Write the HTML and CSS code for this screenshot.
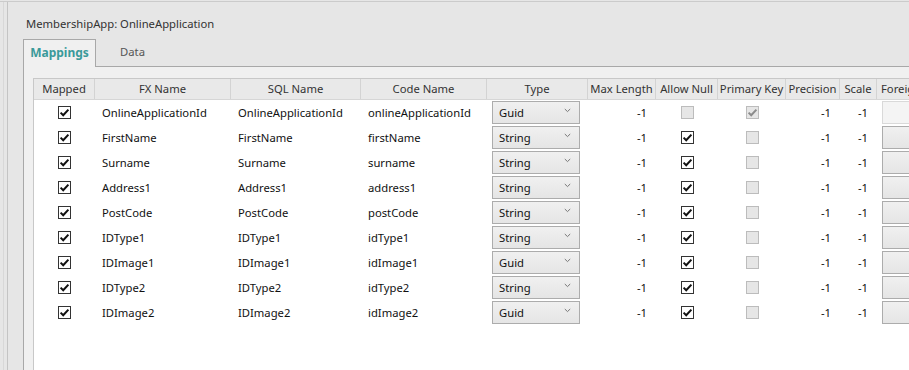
FILE: index.html
```html
<!DOCTYPE html>
<html>
<head>
<meta charset="utf-8">
<link rel="stylesheet" href="styles.css">
</head>
<body>
<div class="window">
  <div class="rail">
    <div class="main">
      <div class="title">MembershipApp: OnlineApplication</div>
      <div class="tabs">
        <div class="tab active">Mappings</div>
        <div class="tab">Data</div>
      </div>
      <div class="panel">
        <div class="grid">
          <div class="hdr">
            <div class="hc">Mapped</div>
            <div class="hc">FX Name</div>
            <div class="hc">SQL Name</div>
            <div class="hc">Code Name</div>
            <div class="hc">Type</div>
            <div class="hc">Max Length</div>
            <div class="hc">Allow Null</div>
            <div class="hc">Primary Key</div>
            <div class="hc">Precision</div>
            <div class="hc">Scale</div>
            <div class="hc left">Foreign Key</div>
          </div>
          <div id="rows"></div>
        </div>
      </div>
    </div>
  </div>
</div>
<script src="app.js"></script>
</body>
</html>
```
FILE: app.js
```js
var data = [
  ["OnlineApplicationId","OnlineApplicationId","onlineApplicationId","Guid",false,true],
  ["FirstName","FirstName","firstName","String",true,false],
  ["Surname","Surname","surname","String",true,false],
  ["Address1","Address1","address1","String",true,false],
  ["PostCode","PostCode","postCode","String",true,false],
  ["IDType1","IDType1","idType1","String",true,false],
  ["IDImage1","IDImage1","idImage1","Guid",true,false],
  ["IDType2","IDType2","idType2","String",true,false],
  ["IDImage2","IDImage2","idImage2","Guid",true,false]
];
var check = '<svg width="11" height="11" viewBox="0 0 11 11"><path d="M1.6 5.6 L4.2 8.2 L9.4 2.6" fill="none" stroke="currentColor" stroke-width="2"/></svg>';
var chev = '<svg class="chev" width="7" height="5" viewBox="0 0 7 5"><path d="M0.8 1 L3.5 3.6 L6.2 1" fill="none" stroke="#777" stroke-width="1"/></svg>';
var html = '';
data.forEach(function (r, i) {
  var pk = r[5];
  html += '<div class="row">' +
    '<div class="c center"><span class="cb">' + check + '</span></div>' +
    '<div class="c txt">' + r[0] + '</div>' +
    '<div class="c txt">' + r[1] + '</div>' +
    '<div class="c txt">' + r[2] + '</div>' +
    '<div class="c"><div class="dd"><span>' + r[3] + '</span>' + chev + '</div></div>' +
    '<div class="c num">-1</div>' +
    '<div class="c center">' + (r[4] ? '<span class="cb">' + check + '</span>' : '<span class="cb dis"></span>') + '</div>' +
    '<div class="c center">' + (pk ? '<span class="cb dis">' + check + '</span>' : '<span class="cb dis"></span>') + '</div>' +
    '<div class="c num">-1</div>' +
    '<div class="c num">-1</div>' +
    '<div class="c"><div class="btn' + (pk ? ' off' : '') + '"></div></div>' +
    '</div>';
});
document.getElementById('rows').innerHTML = html;
```
FILE: styles.css
```css
html, body {
  margin: 0;
  height: 100%;
  overflow: hidden;
}
body {
  background: #e6e6e6;
  font-family: "Noto Sans", "Open Sans", sans-serif;
  font-size: 11.25px;
  color: #111;
}
.window {
  height: 369px;
  margin-top: 1px;
  box-sizing: border-box;
  border-top: 1px solid #cbcbcb;
  padding-left: 3px;
}
.rail {
  height: 100%;
  border-left: 1px solid #d8d8d8;
  padding-left: 3px;
}
.main {
  height: 100%;
  border-left: 1px solid #c4c4c4;
  padding-left: 15px;
  display: flex;
  flex-direction: column;
}
.title {
  margin-top: 12px;
  height: 20px;
  line-height: 20px;
  padding-left: 3px;
  color: #333;
}
.tabs {
  display: flex;
  margin-top: 5px;
  height: 27px;
}
.tab {
  width: 73px;
  box-sizing: border-box;
  height: 28px;
  line-height: 26px;
  text-align: center;
  color: #555;
}
.tab.active {
  border: 1px solid #a8a8a8;
  border-bottom: none;
  background: #f0f0f0;
  color: #3a9a9a;
  font-weight: bold;
  font-size: 12px;
  position: relative;
  z-index: 1;
}
.panel {
  flex: 1;
  background: #f0f0f0;
  border-top: 1px solid #a8a8a8;
  border-left: 1px solid #a8a8a8;
  padding: 11px 0 0 9px;
  display: flex;
  min-height: 0;
  min-width: 0;
  overflow: hidden;
}
.grid {
  flex: 1;
  background: #fff;
  border: 1px solid #c8c8c8;
  border-bottom: none;
  border-right: none;
  min-width: 0;
  overflow: hidden;
}
.hdr, .row {
  display: grid;
  grid-template-columns: 61px 136px 130px 126px 101px 68px 62px 68px 54px 37px 140px;
}
.hdr {
  height: 21px;
  background: #e9e9e9;
  border-bottom: 1px solid #d6d6d6;
  box-sizing: border-box;
}
.hc {
  border-right: 1px solid #d3d3d3;
  text-align: center;
  line-height: 20px;
  color: #333;
  white-space: nowrap;
  overflow: hidden;
}
.hc.left {
  text-align: left;
  padding-left: 4px;
  border-right: none;
}
.row {
  height: 25px;
}
.c {
  display: flex;
  align-items: center;
  white-space: nowrap;
  overflow: hidden;
}
.c.center {
  justify-content: center;
}
.c.txt {
  padding-left: 7px;
}
.c.num {
  justify-content: flex-end;
  padding-right: 9px;
}
.cb {
  width: 13px;
  height: 13px;
  box-sizing: border-box;
  border: 1px solid #333;
  background: #fff;
  color: #111;
  display: flex;
  align-items: center;
  justify-content: center;
}
.cb.dis {
  border-color: #bcbcbc;
  background: #e6e6e6;
  color: #8c8c8c;
}
.dd {
  margin-left: 5px;
  width: 88px;
  height: 23px;
  box-sizing: border-box;
  border: 1px solid #acacac;
  background: linear-gradient(#f0f0f0, #e5e5e5);
  display: flex;
  align-items: center;
  justify-content: space-between;
  padding: 0 8px 0 6px;
  color: #111;
}
.chev {
  margin-top: -4px;
}
.btn {
  margin-left: 5px;
  width: 120px;
  height: 23px;
  box-sizing: border-box;
  border: 1px solid #acacac;
  background: linear-gradient(#f0f0f0, #e5e5e5);
}
.btn.off {
  border-color: #d9d9d9;
  background: #f4f4f4;
}
```
